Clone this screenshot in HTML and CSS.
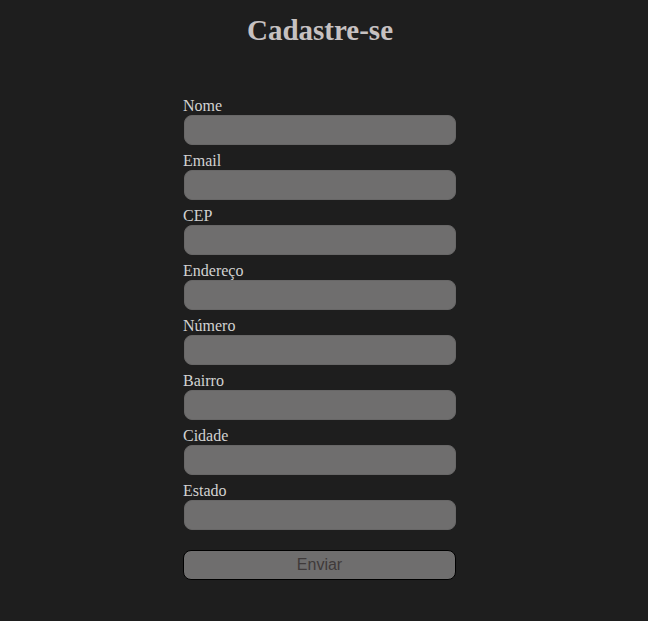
FILE: index.html
```html
<!DOCTYPE html>
<html lang="pt-BR">
<head>
<meta charset="utf-8">
<title>Cadastre-se</title>
<link rel="stylesheet" href="styles.css">
</head>
<body>
<main class="page">
  <h1 class="title">Cadastre-se</h1>
  <form class="form">
    <label class="field"><span class="label">Nome</span><input class="input" type="text"></label>
    <label class="field"><span class="label">Email</span><input class="input" type="email"></label>
    <label class="field"><span class="label">CEP</span><input class="input" type="text"></label>
    <label class="field"><span class="label">Endereço</span><input class="input" type="text"></label>
    <label class="field"><span class="label">Número</span><input class="input" type="text"></label>
    <label class="field"><span class="label">Bairro</span><input class="input" type="text"></label>
    <label class="field"><span class="label">Cidade</span><input class="input" type="text"></label>
    <label class="field"><span class="label">Estado</span><input class="input" type="text"></label>
    <button class="submit" type="button">Enviar</button>
  </form>
</main>
</body>
</html>
```
FILE: styles.css
```css
html, body {
  margin: 0;
  padding: 0;
  background: #1e1e1e;
  height: 100%;
}
body {
  font-family: "Liberation Serif", "Times New Roman", serif;
  color: #d2d2d2;
}
.page {
  width: 640px;
  display: flex;
  flex-direction: column;
  align-items: center;
  padding-top: 14px;
}
.title {
  margin: 0;
  font-size: 29px;
  line-height: 32px;
  font-weight: bold;
  color: #c6c1c1;
}
.form {
  width: 274px;
  margin-top: 51px;
  display: flex;
  flex-direction: column;
}
.field {
  display: flex;
  flex-direction: column;
  margin-bottom: 7px;
}
.label {
  font-size: 16px;
  line-height: 18px;
  height: 18px;
}
.input {
  box-sizing: border-box;
  height: 30px;
  width: 272px;
  margin: 0 0 0 1px;
  border: 1px solid #686767;
  border-radius: 8px;
  background: #6f6e6e;
  outline: none;
}
.submit {
  box-sizing: border-box;
  margin-top: 13px;
  height: 30px;
  width: 273px;
  border: 1px solid #000;
  border-radius: 8px;
  background: #6f6e6e;
  color: #3f3a3a;
  font-family: "Liberation Sans", Arial, sans-serif;
  font-size: 16px;
}
```
